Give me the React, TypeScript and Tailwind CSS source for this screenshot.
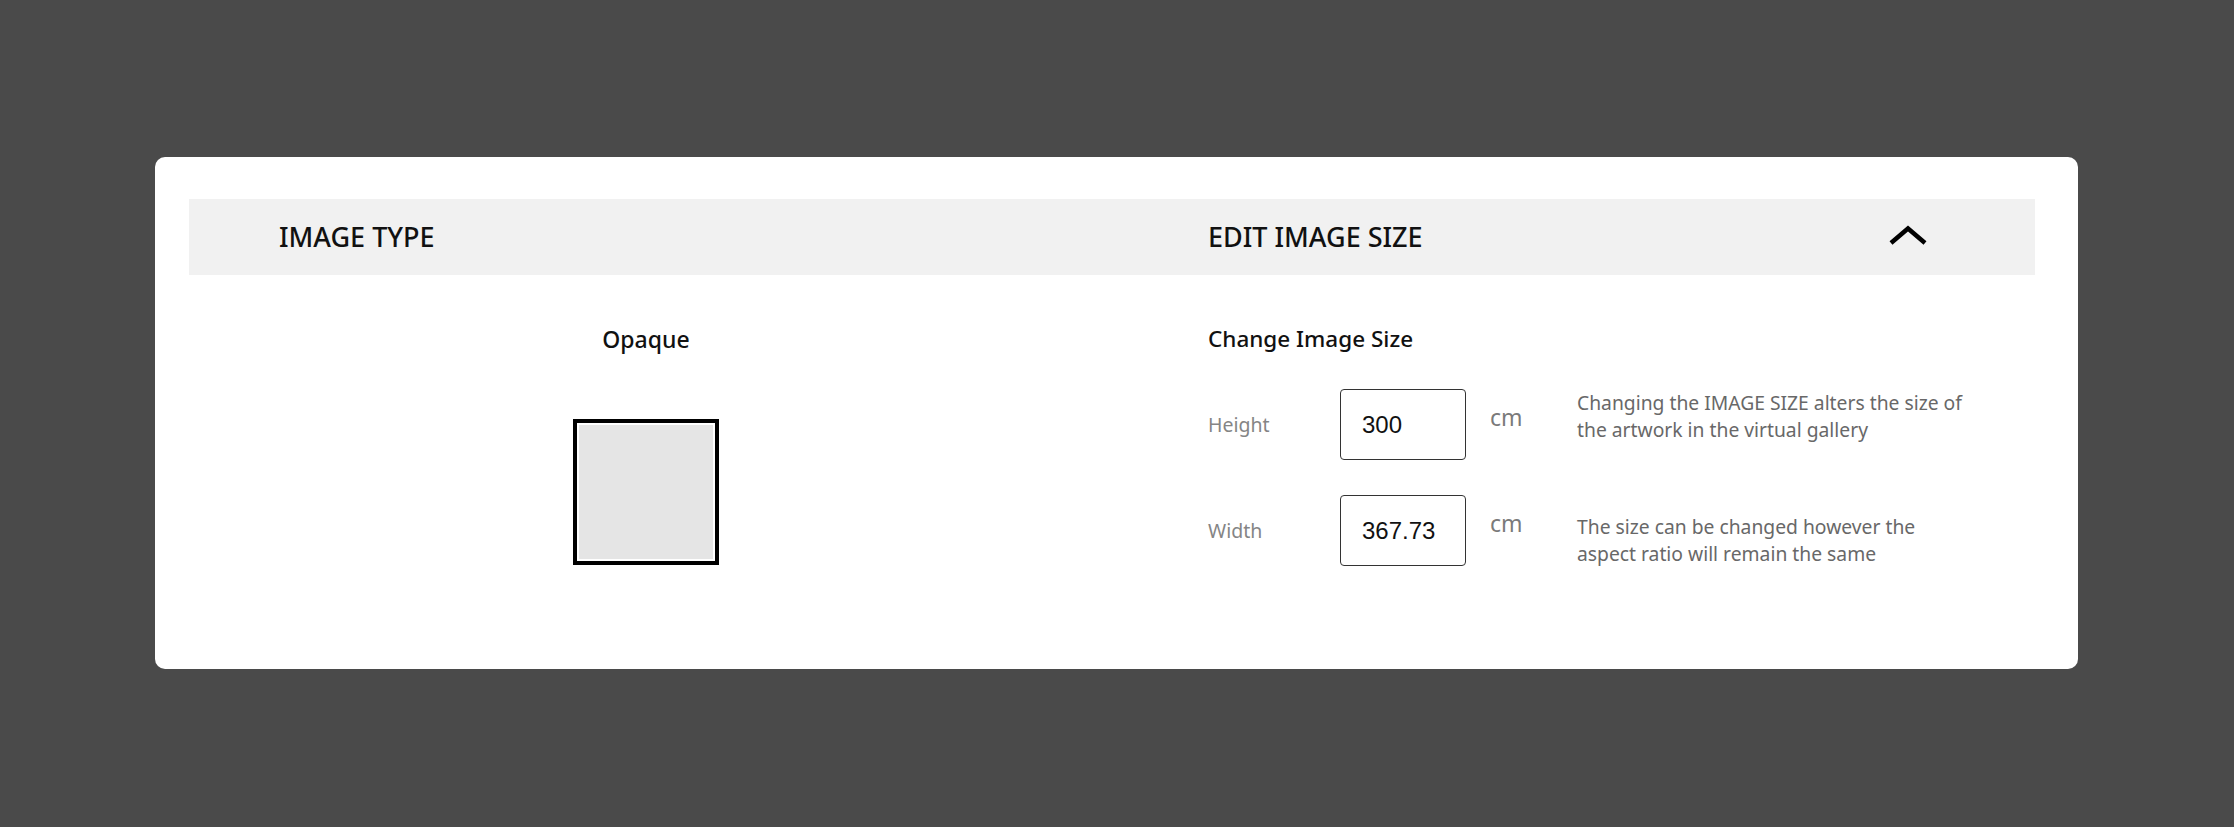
import React from "react";

const sans = { fontFamily: '"Noto Sans", "Open Sans", sans-serif' };
const digits = { fontFamily: '"Liberation Sans", Arial, sans-serif' };

function SizeRow({ label, value }: { label: string; value: string }) {
  return (
    <div className="flex items-center h-[71px]">
      <div className="w-[132px] text-[19.5px] text-[#858585]">{label}</div>
      <div
        className="w-[126px] h-[71px] border border-[#333333] rounded-[4px] pl-[21px] flex items-center text-[24px] text-[#111111]"
        style={digits}
      >
        {value}
      </div>
      <div className="ml-[24px] self-start mt-[13px] text-[23px] leading-[30px] text-[#7a7a7a]">cm</div>
    </div>
  );
}

export default function App() {
  return (
    <div className="w-full h-[827px] bg-[#4a4a4a] pt-[157px] pl-[155px]" style={sans}>
      <div className="w-[1923px] h-[512px] bg-white rounded-[10px] pt-[42px] pl-[34px] pr-[43px]">
        <div className="h-[76px] bg-[#f1f1f1] flex items-center text-[27px] font-medium text-[#111111]">
          <div className="w-[1019px] pl-[90px]">IMAGE TYPE</div>
          <div className="flex-1 flex items-center justify-between pr-[108px]">
            <span>EDIT IMAGE SIZE</span>
            <svg width="38" height="20" viewBox="0 0 38 20" className="mb-[4px]">
              <path d="M2 18 L19 3.5 L36 18" fill="none" stroke="#000" strokeWidth="4.5" strokeLinejoin="miter" />
            </svg>
          </div>
        </div>
        <div className="flex">
          <div className="w-[914px] flex flex-col items-center pt-[48px]">
            <div className="text-[23px] leading-[32px] font-medium text-[#111111]">Opaque</div>
            <div className="mt-[64px] w-[146px] h-[146px] border-4 border-black p-[2px] bg-white">
              <div className="w-full h-full bg-[#e5e5e5]" />
            </div>
          </div>
          <div className="ml-[105px] pt-[49px]">
            <div className="text-[22.5px] leading-[30px] font-medium text-[#111111]">Change Image Size</div>
            <div className="mt-[35px] flex">
              <div className="w-[369px] flex flex-col gap-[35px]">
                <SizeRow label="Height" value="300" />
                <SizeRow label="Width" value="367.73" />
              </div>
              <div className="flex flex-col gap-[70px] text-[19.3px] leading-[27px] text-[#686868]">
                <p className="whitespace-nowrap">
                  <span className="block">Changing the IMAGE SIZE alters the size of</span>
                  <span className="block">the artwork in the virtual gallery</span>
                </p>
                <p className="whitespace-nowrap">
                  <span className="block">The size can be changed however the</span>
                  <span className="block">aspect ratio will remain the same</span>
                </p>
              </div>
            </div>
          </div>
        </div>
      </div>
    </div>
  );
}
